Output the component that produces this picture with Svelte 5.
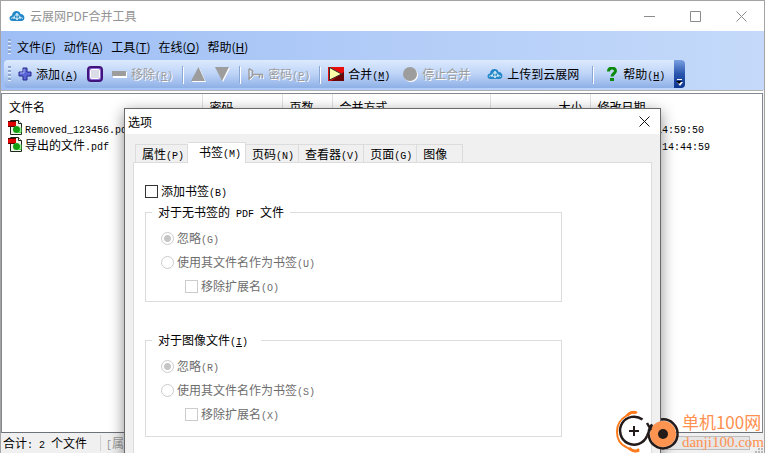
<script>
  const menus = [
    { name: "文件", key: "F" },
    { name: "动作", key: "A" },
    { name: "工具", key: "T" },
    { name: "在线", key: "O" },
    { name: "帮助", key: "H" },
  ];

  const files = [
    { name: "Removed_123456.pdf", latin: true, date: "2021/3/26 14:59:50" },
    { name: "导出的文件", ext: ".pdf", date: "2021/11/18 14:44:59" },
  ];

  const tabs = [
    { name: "属性", key: "P" },
    { name: "书签", key: "M" },
    { name: "页码", key: "N" },
    { name: "查看器", key: "V" },
    { name: "页面", key: "G" },
    { name: "图像", key: "" },
  ];

  const groups = [
    { id: "nobookmark", skip: "G", use: "U", ext: "O" },
    { id: "image", skip: "R", use: "S", ext: "X" },
  ];

  let activeTab = $state("书签");
  let open = $state(true);
  let addBookmark = $state(false);
  let modes = $state({ nobookmark: "skip", image: "skip" });
</script>

{#snippet cloud()}
  <svg class="cloud" width="16" height="12" viewBox="0 0 16 12">
    <path d="M3.5 11C-.5 11-.3 5.700 3 5.500 3.200.2 10.500-.3 11.500 4c4.500-.3 5.500 6.500.8 7z" fill="#2488c8" />
    <path d="M2 8.500l3-1.500 3-4 3 4 3 1.500M5 7l3 2.500L11 7M8 3v6" fill="none" stroke="#b9def3" />
    <path d="M4 8h2M7 5h2M10 8h2M7 9h2" stroke="#fff" />
  </svg>
{/snippet}

{#snippet keyed(name, key)}{name}<span class="en">(<u>{key}</u>)</span>{/snippet}

<div class="window">
  <header class="titlebar">
    {@render cloud()}
    <span class="title">云展网PDF合并工具</span>
    <button class="winbtn" aria-label="最小化">
      <svg width="11" height="11"><path d="M0 5.500h11" stroke="#8c8c8c" /></svg>
    </button>
    <button class="winbtn" aria-label="最大化">
      <svg width="11" height="11"><path d="M.5.5h10v10H.5z" fill="none" stroke="#8c8c8c" /></svg>
    </button>
    <button class="winbtn" aria-label="关闭">
      <svg width="11" height="11"><path d="M.5.5l10 10M10.500.5l-10 10" stroke="#8c8c8c" /></svg>
    </button>
  </header>

  <div class="bars">
    <nav class="menubar">
      <span class="grip"></span>
      {#each menus as menu}
        <button>{menu.name}(<u>{menu.key}</u>)</button>
      {/each}
    </nav>

    <div class="toolbar">
      <span class="grip"></span>
      <button>
        <svg width="14" height="14"><path d="M5 1h4v4h4v4H9v4H5V9H1V5h4z" fill="#5b66d6" stroke="#27298c" /><path d="M6 2v4H2" fill="none" stroke="#a9b5f5" /></svg>
        <span>{@render keyed("添加", "A")}</span>
      </button>
      <button aria-label="属性">
        <svg width="16" height="16"><rect x="1" y="1" width="14" height="14" rx="3" fill="#8d6bd0" stroke="#42127c" stroke-width="2" /><rect x="3.500" y="3.500" width="9" height="9" rx="1" fill="#dcdce8" stroke="#fff" /></svg>
      </button>
      <button disabled>
        <svg width="15" height="8"><path d="M1 2h14v6H1z" fill="#fff" /><path d="M0 1h14v5H0z" fill="#9d9d9d" /></svg>
        <span>{@render keyed("移除", "R")}</span>
      </button>
      <i class="sep"></i>
      <button disabled aria-label="上移">
        <svg width="15" height="15"><path d="M8.500 1L15 15H1z" fill="#fff" /><path d="M7.500 0L14 14H0z" fill="#9d9d9d" /></svg>
      </button>
      <button disabled aria-label="下移">
        <svg width="15" height="15"><path d="M1 1h14L8 15z" fill="#fff" /><path d="M0 0h14L7 14z" fill="#9d9d9d" /></svg>
      </button>
      <i class="sep"></i>
      <button disabled>
        <svg width="16" height="14" fill="none"><path d="M2 3l3 2v5l-3 3V3M6 8.500h10M12.500 9v3M15.500 9v3" stroke="#fff" /><path d="M1 1.500L4.500 4v5L1 12V2M5 7.500h10M11.500 8v3M14.500 8v3" stroke="#9d9d9d" stroke-width="1.500" /></svg>
        <span>{@render keyed("密码", "P")}</span>
      </button>
      <i class="sep"></i>
      <button>
        <svg width="16" height="14"><path d="M0 0h16v14H0z" fill="#e80c0c" /><path d="M16 5v9H3z" fill="#6b0505" /><path d="M1.500.5l12 6.500-12 6z" fill="#ffffa8" stroke="#333" /></svg>
        <span>{@render keyed("合并", "M")}</span>
      </button>
      <button class="wide" disabled>
        <svg width="15" height="15"><circle cx="8" cy="8" r="7" fill="#fff" /><circle cx="7" cy="7" r="7" fill="#9d9d9d" /></svg>
        <span>停止合并</span>
      </button>
      <button class="wide">
        {@render cloud()}
        <span>上传到云展网</span>
      </button>
      <i class="sep"></i>
      <button class="wide">
        <svg width="14" height="14" viewBox="-2 0 14 14"><path d="M1.500 4.500C1.500 0 8.500 0 8.500 4c0 2.500-3.500 2.500-3.500 5.500" fill="none" stroke="#0c8a0c" stroke-width="3" /><path d="M3 11h4v3H3z" fill="#0c8a0c" /></svg>
        <span>{@render keyed("帮助", "H")}</span>
      </button>
      <button class="more" aria-label="更多">
        <svg width="7" height="7"><path d="M1 .5h5" stroke="#fff" /><path d="M1 3h6L4 7z" fill="#fff" /><path d="M0 2h6L3 5z" fill="#000" /></svg>
      </button>
    </div>
  </div>

  <main class="list">
    <table>
      <colgroup>
        <col class="c-name" /><col class="c-pwd" /><col class="c-pages" /><col class="c-mode" /><col class="c-size" /><col />
      </colgroup>
      <thead>
        <tr>
          <th>文件名</th>
          <th>密码</th>
          <th>页数</th>
          <th>合并方式</th>
          <th class="right">大小</th>
          <th>修改日期</th>
        </tr>
      </thead>
      <tbody>
        {#each files as file}
          <tr>
            <td>
              <span class="file">
                <svg width="15" height="15">
                  <path d="M2.500.5h8l3 3v11h-11z" fill="#eef3e6" stroke="#1a2a1a" />
                  <path d="M10.500.5v3h3" fill="#fff" stroke="#1a2a1a" />
                  <path d="M0 2h8v4H0z" fill="#e00000" /><path d="M0 1.500h8M0 6.500h7" stroke="#500" />
                  <circle cx="8.500" cy="9.500" r="3.500" fill="#12a012" /><path d="M10 12.500h3v-5" fill="none" stroke="#3fe03f" />
                </svg>
                <span>{#if file.latin}<span class="en">{file.name}</span>{:else}{file.name}<span class="en">{file.ext}</span>{/if}</span>
              </span>
            </td>
            <td></td>
            <td></td>
            <td></td>
            <td></td>
            <td><span class="en">{file.date}</span></td>
          </tr>
        {/each}
      </tbody>
    </table>
  </main>

  <footer class="status">
    <span class="total">合计<span class="en">:&nbsp;2&nbsp;</span>个文件</span>
    <span class="props"><span class="en">[</span>属性<span class="en">]</span></span>
    <span class="progress"></span>
    <svg width="9" height="6"><path d="M0 4h2v2H0zM3 4h2v2H3zM6 4h2v2H6zM3 1h2v2H3zM6 1h2v2H6z" fill="#b8b8b8" /></svg>
  </footer>

  {#if open}
    <div class="dialog" role="dialog" aria-labelledby="dlg-title">
      <div class="dlg-head">
        <span id="dlg-title">选项</span>
        <button aria-label="关闭" onclick={() => (open = false)}>
          <svg width="11" height="11"><path d="M.5.5l10 10M10.500.5l-10 10" stroke="#111" /></svg>
        </button>
      </div>

      <div class="dlg-body">
        <div class="tabs" role="tablist">
          {#each tabs as tab}
            <button role="tab" aria-selected={activeTab === tab.name} class:active={activeTab === tab.name} class:last={!tab.key} onclick={() => (activeTab = tab.name)}>
              {tab.name}{#if tab.key}<span class="en">({tab.key})</span>{/if}
            </button>
          {/each}
        </div>

        <div class="panel" role="tabpanel">
          <label class="add"><input type="checkbox" bind:checked={addBookmark} /><span>添加书签<span class="en">(B)</span></span></label>

          {#each groups as group}
            <fieldset disabled={!addBookmark} class={group.id}>
              <legend>
                {#if group.id === "image"}{@render keyed("对于图像文件", "I")}{:else}对于无书签的<span class="en">&nbsp;PDF&nbsp;</span>文件{/if}
              </legend>
              <label><input type="radio" value="skip" bind:group={modes[group.id]} /><span>忽略<span class="en">({group.skip})</span></span></label>
              <label><input type="radio" value="use" bind:group={modes[group.id]} /><span>使用其文件名作为书签<span class="en">({group.use})</span></span></label>
              <label class="indent"><input type="checkbox" /><span>移除扩展名<span class="en">({group.ext})</span></span></label>
            </fieldset>
          {/each}
        </div>
      </div>
    </div>
  {/if}

  <div class="brand">
    <svg width="64" height="44" viewBox="0 0 64 44">
      <path d="M21 4C17 1 13 5 10 7-2 14-2 32 10 38c5 3 9 6 13 2" fill="none" stroke="#ff7a1a" stroke-width="2" />
      <path d="M20 4C17 2 13 4 11 7M13 39c3 3 7 4 10 2" fill="none" stroke="#ff7a1a" stroke-width="3" />
      <path d="M26.500 10.500A14 14 0 1 0 31 27" fill="#fff" stroke="#231a1a" stroke-width="2.500" />
      <path d="M18 17v10M13 22h10" stroke="#231a1a" stroke-width="2" />
      <circle cx="47" cy="25" r="13" fill="#ff9450" />
      <path d="M45 10.500A14.500 14.500 0 1 1 36 15.500L31 27M31 14l4 7" fill="none" stroke="#231a1a" stroke-width="2.500" />
      <circle cx="47" cy="25" r="5" fill="#231a1a" />
    </svg>
    <div class="brand-text">
      <span class="cn">单机100网</span>
      <span class="url">danji100.com</span>
    </div>
  </div>
</div>

<style>
  :global(body) {
    overflow: hidden;
  }

  .window {
    position: relative;
    display: flex;
    flex-direction: column;
    height: 100vh;
    box-sizing: border-box;
    border: 1px solid #a3a3a3;
    border-bottom: none;
    background: #f0f0f0;
    color: #000;
    font: 12px/16px "Noto Sans CJK SC", sans-serif;
    overflow: hidden;
    white-space: nowrap;
  }

  button {
    border: none;
    padding: 0;
    background: none;
    color: inherit;
    font: inherit;
  }

  svg {
    display: block;
    flex: none;
  }

  .en {
    font-family: "Liberation Mono", monospace;
    font-size: 10px;
    line-height: 10px;
    white-space: pre;
  }

  /* title bar */
  .titlebar {
    display: flex;
    align-items: center;
    flex: none;
    height: 30px;
    padding-left: 8px;
    background: #fff;
  }

  .title {
    flex: 1;
    margin-left: 5px;
    color: #949494;
  }

  .winbtn {
    display: flex;
    align-items: center;
    justify-content: center;
    width: 46px;
    height: 28px;
  }

  /* menu and tool bar */
  .bars {
    flex: none;
    background: linear-gradient(to right, #9ebef5, #c5dafa);
    padding-bottom: 2px;
  }

  .menubar {
    display: flex;
    align-items: center;
    height: 29px;
    gap: 8px;
    padding: 2px 0 0 7px;
    box-sizing: border-box;
  }

  .grip {
    width: 3px;
    height: 16px;
    margin-right: 2px;
    background: repeating-linear-gradient(to bottom, #8da4cc 0 2px, #e6effd 2px 3px, transparent 3px 4px);
  }

  .menubar .grip {
    margin-right: -2px;
  }

  .toolbar {
    display: flex;
    align-items: center;
    gap: 1px;
    width: max-content;
    height: 28px;
    margin-left: 3px;
    padding-left: 4px;
    border-radius: 4px;
    background: linear-gradient(to bottom, #dceafd, #bdd3f7 50%, #8eb0e6);
  }

  .toolbar button {
    display: flex;
    align-items: center;
    gap: 4px;
    padding: 0 4px;
  }

  .toolbar button.wide {
    padding: 0 8px;
  }

  .toolbar button:disabled {
    color: #9d9d9d;
    text-shadow: 1px 1px #fff;
  }

  .sep {
    width: 1px;
    height: 17px;
    margin: 0 3px 0 4px;
    background: #8aa6d2;
    box-shadow: 1px 1px #fff;
  }

  .toolbar button.more {
    align-items: flex-end;
    align-self: stretch;
    width: 11px;
    padding: 2px;
    border-radius: 0 4px 4px 0;
    background: linear-gradient(to bottom, #7aa0e2, #2a55ad 50%, #0c3590);
  }

  /* file list */
  .list {
    flex: 1;
    margin: 3px 1px 0 0;
    border: 1px solid #828790;
    border-bottom-color: #6d7178;
    background: #fff;
    overflow: hidden;
    box-shadow: 0 -2px 0 #fff, 0 -3px 0 #b0b0b0;
  }

  table {
    width: 100%;
    table-layout: fixed;
    border-collapse: collapse;
  }

  .c-name { width: 200px; }
  .c-pwd { width: 80px; }
  .c-pages { width: 50px; }
  .c-mode { width: 158px; }
  .c-size { width: 100px; }

  th {
    height: 25px;
    padding: 0 7px;
    border-right: 1px solid #e2e2e2;
    font-weight: normal;
    text-align: left;
  }

  th:last-child {
    border-right: none;
  }

  th.right {
    text-align: right;
  }

  td {
    height: 17px;
    padding: 0 6px;
  }

  .file {
    display: flex;
    align-items: center;
    gap: 2px;
  }

  /* status bar */
  .status {
    display: flex;
    align-items: center;
    flex: none;
    height: 20px;
  }

  .status svg {
    align-self: flex-end;
  }

  .total {
    width: 97px;
    padding-left: 2px;
    border-right: 1px solid #d2d2d2;
  }

  .props {
    flex: 1;
    padding-left: 5px;
    color: #999;
  }

  .progress {
    width: 84px;
    height: 14px;
    margin-right: 5px;
    border: 1px solid #bcbcbc;
    background: #e6e6e6;
    box-sizing: border-box;
  }

  /* options dialog */
  .dialog {
    position: absolute;
    left: 123px;
    top: 107px;
    width: 535px;
    border: 1px solid #6a6a6a;
    background: #f0f0f0;
    box-shadow: 0 4px 14px rgba(0, 0, 0, 0.45);
  }

  .dlg-head {
    display: flex;
    align-items: center;
    justify-content: space-between;
    height: 25px;
    padding: 0 10px 0 3px;
    background: #fff;
  }

  .dlg-body {
    padding: 8px;
  }

  .tabs {
    display: flex;
    align-items: flex-end;
    height: 20px;
    padding-left: 2px;
  }

  .tabs button {
    height: 18px;
    padding: 0 4px 0 6px;
    border: 1px solid #dcdcdc;
    border-bottom: none;
    border-left-width: 0;
  }

  .tabs button:first-child {
    padding-right: 3px;
    border-left-width: 1px;
  }

  .tabs button.active {
    position: relative;
    height: 21px;
    margin-bottom: -1px;
    padding: 0 4px 3px 11px;
    background: #fff;
  }

  .tabs button.last {
    padding-right: 15px;
  }

  .panel {
    padding: 19px 89px 40px 11px;
    border: 1px solid #dcdcdc;
    background: #fff;
  }

  label {
    display: flex;
    align-items: center;
    height: 24px;
  }

  label.add {
    height: 18px;
  }

  label.indent {
    padding-left: 24px;
  }

  input {
    appearance: none;
    flex: none;
    width: 13px;
    height: 13px;
    margin: 0 3px 0 0;
    border: 1px solid #333;
    background: #fff;
    box-sizing: border-box;
  }

  input[type="radio"] {
    border-radius: 50%;
  }

  input:disabled {
    border-color: #ccc;
  }

  input[type="radio"]:checked {
    background: radial-gradient(circle, #333 3px, #fff 4px);
  }

  input[type="radio"]:checked:disabled {
    background: radial-gradient(circle, #c6c6c6 3px, #fff 4px);
  }

  input[type="checkbox"]:checked {
    background: #333;
    box-shadow: inset 0 0 0 2px #fff;
  }

  fieldset {
    min-width: 0;
    margin: 4px 0 0;
    padding: 6px 15px 3px;
    border: 1px solid #dcdcdc;
  }

  fieldset.image {
    margin-top: 30px;
    padding-bottom: 10px;
  }

  fieldset:disabled label {
    color: #6d6d6d;
  }

  legend {
    margin-left: -9px;
    padding: 0 6px;
  }

  fieldset.image legend {
    padding-right: 13px;
  }

  /* brand mark over the lower right corner */
  .brand {
    position: absolute;
    right: 0;
    bottom: 0;
    display: flex;
    align-items: center;
    gap: 2px;
    color: #ff9050;
  }

  .brand-text {
    display: flex;
    flex-direction: column;
  }

  .cn {
    font-size: 17px;
    line-height: 22px;
  }

  .url {
    font: 15px/18px "Liberation Serif", serif;
  }
</style>
